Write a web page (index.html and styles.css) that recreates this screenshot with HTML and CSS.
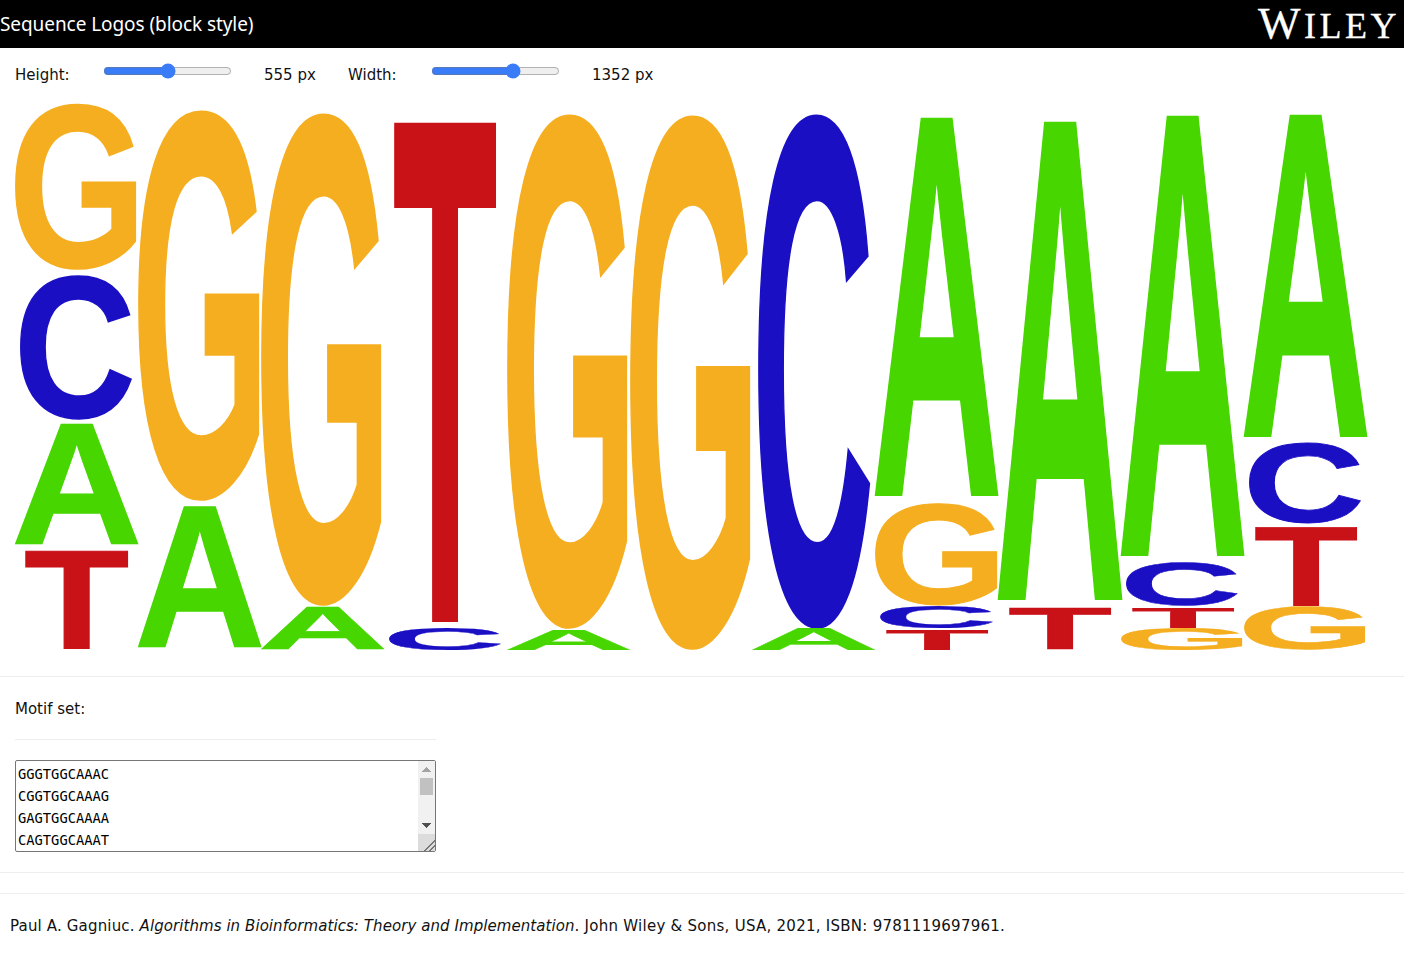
FILE: index.html
```html
<!DOCTYPE html>
<html lang="en">
<head>
<meta charset="utf-8">
<title>Sequence Logos (block style)</title>
<link rel="stylesheet" href="styles.css">
</head>
<body>
<header class="topbar">
  <div class="title">Sequence Logos (block style)</div>
  <div class="brand"><span class="brand-w">W</span>ILEY</div>
</header>
<div class="controls">
  <span class="label label-h">Height:</span>
  <input class="slider" type="range" min="0" max="1110" value="555">
  <span class="value value-h">555 px</span>
  <span class="label label-w">Width:</span>
  <input class="slider" type="range" min="0" max="2055" value="1352">
  <span class="value">1352 px</span>
</div>
<svg class="logo" viewBox="0 95 1404 565" xmlns="http://www.w3.org/2000/svg">
  <text class="g" data-box="15 136 104 270">G</text>
  <text class="c" data-box="20 132 275 420">C</text>
  <text class="a" data-box="15 138 424 544">A</text>
  <text class="t" data-box="25 128 551 649">T</text>
  <text class="g" data-box="138 259 111 501">G</text>
  <text class="a" data-box="138 261 508 648">A</text>
  <text class="g" data-box="261 381 114 606">G</text>
  <text class="a" data-box="261 384 607 649">A</text>
  <text class="t" data-box="394 496 123 622">T</text>
  <text class="c" data-box="389 501 628 650">C</text>
  <text class="g" data-box="507 627 115 629">G</text>
  <text class="a" data-box="507 630 629 650">A</text>
  <text class="g" data-box="630 750 116 650">G</text>
  <text class="c" data-box="758 870 115 629">C</text>
  <text class="a" data-box="752 875 628 650">A</text>
  <text class="a" data-box="875 998 118 496">A</text>
  <text class="g" data-box="875 997 504 606">G</text>
  <text class="c" data-box="880 993 606 628">C</text>
  <text class="t" data-box="886 988 629 650">T</text>
  <text class="a" data-box="998 1122 122 600">A</text>
  <text class="t" data-box="1009 1111 608 649">T</text>
  <text class="a" data-box="1121 1244 116 556">A</text>
  <text class="c" data-box="1126 1238 562 606">C</text>
  <text class="t" data-box="1132 1234 607 628">T</text>
  <text class="g" data-box="1121 1242 628 650">G</text>
  <text class="a" data-box="1244 1367 115 437">A</text>
  <text class="c" data-box="1249 1361 443 524">C</text>
  <text class="t" data-box="1255 1357 527 605">T</text>
  <text class="g" data-box="1244 1365 606 650">G</text>
</svg>
<hr class="rule">
<div class="motif-label">Motif set:</div>
<hr class="rule rule-short">
<div class="motif-box">
  <textarea class="motifs" spellcheck="false">GGGTGGCAAAC
CGGTGGCAAAG
GAGTGGCAAAA
CAGTGGCAAAT
GGGTGGCAAAC
AGGTGGCAAAC
TGGTGGCAAAA
GGGTGGCAGAT
CAGTGGCAAAC</textarea>
  <div class="scrollbar" aria-hidden="true">
    <div class="sb-btn sb-up"></div>
    <div class="sb-thumb"></div>
    <div class="sb-track"></div>
    <div class="sb-btn sb-down"></div>
    <div class="sb-corner"></div>
  </div>
</div>
<hr class="rule rule-a">
<hr class="rule rule-b">
<p class="cite">Paul A. Gagniuc. <em class="cite-book">Algorithms in Bioinformatics: Theory and Implementation</em><span class="cite-rest">. John Wiley &amp; Sons, USA, 2021, ISBN: 9781119697961.</span></p>
<script src="logo.js"></script>
</body>
</html>
```
FILE: styles.css
```css
* { box-sizing: border-box; }
html, body { margin: 0; padding: 0; background: #fff; }
body { font-family: "DejaVu Sans", Verdana, sans-serif; font-size: 15px; color: #111; }

.topbar {
  height: 48px;
  background: #000;
  color: #fff;
  display: flex;
  align-items: center;
  justify-content: space-between;
  padding-right: 4px;
}
.title { font-family: "Noto Sans", sans-serif; font-size: 19px; letter-spacing: -0.07px; }
.brand {
  font-family: "Liberation Serif", serif;
  font-size: 36px;
  letter-spacing: 3.5px;
  line-height: 1;
  padding-bottom: 2px;
  -webkit-text-stroke: 0.3px #fff;
}
.brand-w { font-size: 45px; }

.controls {
  height: 47px;
  display: flex;
  align-items: center;
  padding-left: 15px;
}
.label, .value { padding-top: 6px; }
.label-h { width: 89px; }
.label-w { width: 84px; }
.slider { width: 129px; margin: -2px -1px 0; flex: none; accent-color: #3a7cf8; }
.value { margin-left: 33px; }
.value-h { width: 84px; }

.logo { display: block; width: 1404px; height: 565px; overflow: visible; }
.logo text { font-family: "Liberation Sans", Arial, sans-serif; font-weight: 700; font-size: 400px; stroke-width: 3px; stroke-linejoin: miter; }
.g { fill: #f5ae20; stroke: #f5ae20; }
.c { fill: #1b0fc4; stroke: #1b0fc4; }
.a { fill: #47d600; stroke: #47d600; }
.t { fill: #c91118; stroke: #c91118; }

.rule { border: 0; border-top: 1px solid #eee; margin: 0; height: 0; }
.logo + .rule { margin-top: 16px; }
.motif-label { height: 62px; line-height: 62px; padding: 1px 0 0 15px; }
.rule-short { width: 421px; margin-left: 15px; }

.motif-box { position: relative; width: 421px; height: 92px; margin: 20px 0 0 15px; }
.motifs {
  display: block;
  width: 100%;
  height: 100%;
  padding: 2px;
  border: 1px solid #767676;
  border-radius: 2px;
  font-family: "DejaVu Sans Mono", monospace;
  font-size: 13.75px;
  line-height: 22px;
  color: #000;
  overflow: hidden;
  resize: none;
}
.scrollbar {
  position: absolute;
  top: 1px;
  right: 1px;
  bottom: 1px;
  width: 17px;
  background: #f1f1f1;
  display: flex;
  flex-direction: column;
}
.sb-btn { height: 17px; flex: none; background-repeat: no-repeat; background-position: center; background-size: 9px 5px; }
.sb-up { background-image: conic-gradient(from 135deg at 50% 0, #a3a3a3 90deg, transparent 0); }
.sb-down { background-image: conic-gradient(from -45deg at 50% 100%, #505050 90deg, transparent 0); }
.sb-thumb { height: 17px; flex: none; margin: 0 2px; background: #c1c1c1; }
.sb-track { flex: 1; }
.sb-corner {
  height: 17px;
  flex: none;
  background:
    linear-gradient(135deg, transparent 66%, #777 66%, #777 71%, transparent 71%, transparent 82%, #777 82%, #777 87%, transparent 87%),
    #dcdcdc;
}

.rule-a { margin-top: 20px; }
.rule-b { margin-top: 20px; }
.cite { margin: 21px 0 0; padding-left: 10px; line-height: 22px; letter-spacing: 0.16px; }
.cite-book { letter-spacing: 0.07px; }
.cite-rest { letter-spacing: 0.26px; }
```
FILE: logo.js
```js
// Fit each letter of the sequence logo to its stack slot, measured by the glyph's painted ink.
const SIZE = 800, OX = 150, OY = 600;
const STROKE = 3;
const ctx = document.createElement('canvas');
ctx.width = ctx.height = SIZE;
const g = ctx.getContext('2d', { willReadFrequently: true });
const cache = {};

function ink(ch) {
  if (cache[ch]) return cache[ch];
  g.clearRect(0, 0, SIZE, SIZE);
  g.font = '700 400px "Liberation Sans"';
  g.fillStyle = '#000';
  g.fillText(ch, OX, OY);
  const d = g.getImageData(0, 0, SIZE, SIZE).data;
  let l = SIZE, r = 0, t = SIZE, b = 0;
  for (let y = 0; y < SIZE; y++) {
    for (let x = 0; x < SIZE; x++) {
      if (d[(y * SIZE + x) * 4 + 3] > 127) {
        if (x < l) l = x;
        if (x + 1 > r) r = x + 1;
        if (y < t) t = y;
        if (y + 1 > b) b = y + 1;
      }
    }
  }
  const half = STROKE / 2;
  return (cache[ch] = { l: l - OX - half, r: r - OX + half, t: t - OY - half, b: b - OY + half });
}

document.querySelectorAll('.logo text').forEach((el) => {
  const [x0, x1, y0, y1] = el.dataset.box.split(' ').map(Number);
  const m = ink(el.textContent);
  const sx = (x1 - x0) / (m.r - m.l);
  const sy = (y1 - y0) / (m.b - m.t);
  el.setAttribute('transform', `matrix(${sx} 0 0 ${sy} ${x0 - sx * m.l} ${y1 - sy * m.b})`);
});
```
